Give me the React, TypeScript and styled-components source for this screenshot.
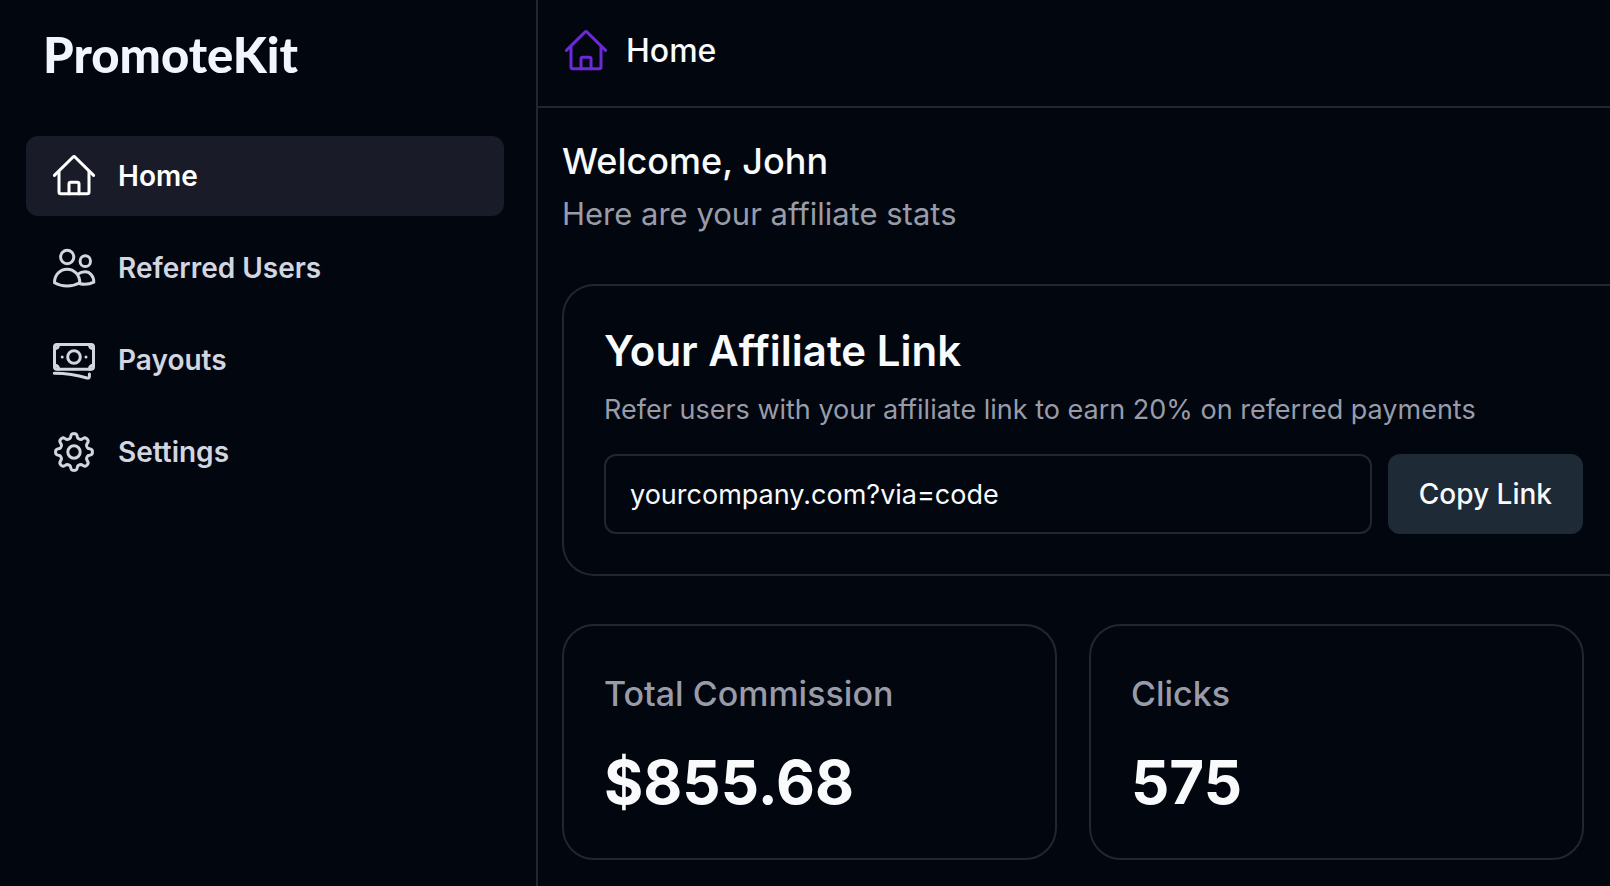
import React from 'react';
import styled, { createGlobalStyle } from 'styled-components';

const color = {
  page: '#01060f',
  line: '#1f2831',
  active: '#1a1b28',
  button: '#1f2a37',
  text: '#f8fafc',
  nav: '#d3d6e0',
  muted: '#999ca8',
  accent: '#6d28d9',
};

const GlobalStyle = createGlobalStyle`
  *, *::before, *::after { box-sizing: border-box; }
  body {
    margin: 0;
    background: ${color.page};
    color: ${color.text};
    font-family: Inter, "Liberation Sans", sans-serif;
  }
  h1, h2, h3, p { margin: 0; }
`;

const Page = styled.div`
  display: flex;
  min-height: 100vh;
`;

const Sidebar = styled.aside`
  flex: 0 0 538px;
  padding: 24px 32px 24px 26px;
  border-right: 2px solid ${color.line};
`;

const Logo = styled.a`
  display: block;
  padding-left: 17px;
  color: #f1f5fd;
  font: 900 49px/60px Lato, sans-serif;
  text-decoration: none;
`;

const Nav = styled.nav`
  display: flex;
  flex-direction: column;
  gap: 12px;
  margin-top: 52px;
`;

const NavLink = styled.a<{ $active?: boolean }>`
  display: flex;
  align-items: center;
  gap: 20px;
  height: 80px;
  padding: 0 24px;
  border-radius: 12px;
  background: ${(p) => (p.$active ? color.active : 'transparent')};
  color: ${(p) => (p.$active ? '#ffffff' : color.nav)};
  font-size: 28px;
  font-weight: 600;
  line-height: 40px;
  text-decoration: none;
`;

const Icon = styled.svg`
  flex: none;
  width: 48px;
  height: 48px;
  fill: none;
  stroke: currentColor;
  stroke-width: 3;
  stroke-linecap: round;
  stroke-linejoin: round;
`;

const Content = styled.div`
  flex: 1;
  min-width: 0;
`;

const Header = styled.header`
  display: flex;
  align-items: center;
  gap: 16px;
  height: 108px;
  padding: 0 24px 4px;
  border-bottom: 2px solid ${color.line};
`;

const HeaderIcon = styled.span`
  display: flex;
  color: ${color.accent};
`;

const PageTitle = styled.h1`
  font-size: 32px;
  font-weight: 500;
  line-height: 40px;
`;

const Main = styled.main`
  padding: 32px 0 24px 24px;
`;

const Welcome = styled.h2`
  font-size: 36px;
  font-weight: 500;
  line-height: 42px;
`;

const Intro = styled.p`
  margin-top: 12px;
  color: ${color.muted};
  font-size: 31px;
  line-height: 40px;
`;

/* Runs off the right edge of the content area, so it has no right side. */
const LinkCard = styled.section`
  margin-top: 50px;
  padding: 40px 27px 40px 40px;
  border: 2px solid ${color.line};
  border-right: 0;
  border-radius: 32px 0 0 32px;
`;

const CardTitle = styled.h2`
  font-size: 42px;
  font-weight: 600;
  line-height: 50px;
`;

const CardText = styled.p`
  margin-top: 14px;
  color: ${color.muted};
  font-size: 27px;
  line-height: 40px;
`;

const LinkRow = styled.div`
  display: flex;
  gap: 16px;
  margin-top: 24px;
`;

const LinkInput = styled.input`
  flex: 1;
  min-width: 0;
  height: 80px;
  padding: 0 24px;
  border: 2px solid ${color.line};
  border-radius: 12px;
  background: transparent;
  color: ${color.text};
  font-family: inherit;
  font-size: 27px;
`;

const CopyButton = styled.button`
  height: 80px;
  padding: 0 31px;
  border: 0;
  border-radius: 12px;
  background: ${color.button};
  color: ${color.text};
  font-family: inherit;
  font-size: 28px;
  font-weight: 500;
  white-space: nowrap;
  cursor: pointer;
`;

const Stats = styled.section`
  display: grid;
  grid-template-columns: repeat(2, minmax(0, 1fr));
  gap: 32px;
  margin-top: 48px;
  padding-right: 26px;
`;

const StatCard = styled.article`
  padding: 40px;
  border: 2px solid ${color.line};
  border-radius: 32px;
`;

const StatLabel = styled.h3`
  color: ${color.muted};
  font-size: 34px;
  font-weight: 500;
  line-height: 56px;
`;

const StatValue = styled.p`
  margin-top: 24px;
  font-size: 60px;
  font-weight: 700;
  line-height: 72px;
`;

const HomeIcon = () => (
  <Icon viewBox="0 0 48 48" aria-hidden="true">
    <path d="M4.4 23.4 22.8 5.2q1.2-1.2 2.4 0L43.6 23.4" />
    <path d="M9 19.5V40q0 1.8 1.8 1.8H37.2q1.8 0 1.8-1.8V19.5" />
    <path d="M19 41.8V32q0-1.8 1.8-1.8h6.4q1.8 0 1.8 1.8v9.8" />
  </Icon>
);

const UsersIcon = () => (
  <Icon viewBox="0 0 48 48" aria-hidden="true">
    <ellipse cx="17.2" cy="13" rx="6.6" ry="6.8" />
    <ellipse cx="35.3" cy="17.2" rx="5.2" ry="5.4" />
    <path d="M4.5 38.8C4.5 31 10 25.2 17.1 25.2S29.8 31 29.8 38.8C22 43.2 12.2 43.2 4.5 38.8Z" />
    <path d="M28 30.2C30 28.6 32.4 27.8 35 27.8 40 27.8 43.8 32 43.8 38.2 39.4 40.4 34 40.6 29.8 39.8" />
  </Icon>
);

const BanknotesIcon = () => (
  <Icon viewBox="0 0 48 48" aria-hidden="true">
    <rect x="4.5" y="8.4" width="39" height="24.8" rx="2.4" />
    <path d="M4.5 12.4q4 0 4-4M43.5 12.4q-4 0-4-4M4.5 29.2q4 0 4 4M43.5 29.2q-4 0-4 4" />
    <circle cx="24" cy="21" r="6.3" />
    <path d="M12.2 21h.01M36 21h.01" />
    <path d="M4.4 37.3C16 37.4 27 39 37 42q2.4.6 2.4-1.8V38" />
  </Icon>
);

const gearPoints = Array.from({ length: 192 }, (_, i) => {
  const angle = (i / 192) * Math.PI * 2;
  const wave = Math.tanh(1.8 * Math.cos(8 * angle)) / Math.tanh(1.8);
  const radius = 16.2 + 2.2 * wave;
  return `${(24 + radius * Math.sin(angle)).toFixed(2)},${(24 - radius * Math.cos(angle)).toFixed(2)}`;
}).join(' ');

const GearIcon = () => (
  <Icon viewBox="0 0 48 48" aria-hidden="true">
    <polygon points={gearPoints} />
    <circle cx="24" cy="24" r="6.2" />
  </Icon>
);

const navItems = [
  { label: 'Home', icon: HomeIcon, active: true },
  { label: 'Referred Users', icon: UsersIcon },
  { label: 'Payouts', icon: BanknotesIcon },
  { label: 'Settings', icon: GearIcon },
];

const stats = [
  { label: 'Total Commission', value: '$855.68' },
  { label: 'Clicks', value: '575' },
];

export default function App() {
  return (
    <>
      <GlobalStyle />
      <Page>
        <Sidebar>
          <Logo href="#">PromoteKit</Logo>
          <Nav aria-label="Main">
            {navItems.map(({ label, icon: ItemIcon, active }) => (
              <NavLink key={label} href="#" $active={active} aria-current={active ? 'page' : undefined}>
                <ItemIcon />
                {label}
              </NavLink>
            ))}
          </Nav>
        </Sidebar>
        <Content>
          <Header>
            <HeaderIcon>
              <HomeIcon />
            </HeaderIcon>
            <PageTitle>Home</PageTitle>
          </Header>
          <Main>
            <Welcome>Welcome, John</Welcome>
            <Intro>Here are your affiliate stats</Intro>
            <LinkCard>
              <CardTitle>Your Affiliate Link</CardTitle>
              <CardText>Refer users with your affiliate link to earn 20% on referred payments</CardText>
              <LinkRow>
                <LinkInput type="text" aria-label="Your affiliate link" readOnly value="yourcompany.com?via=code" />
                <CopyButton type="button">Copy Link</CopyButton>
              </LinkRow>
            </LinkCard>
            <Stats>
              {stats.map(({ label, value }) => (
                <StatCard key={label}>
                  <StatLabel>{label}</StatLabel>
                  <StatValue>{value}</StatValue>
                </StatCard>
              ))}
            </Stats>
          </Main>
        </Content>
      </Page>
    </>
  );
}
